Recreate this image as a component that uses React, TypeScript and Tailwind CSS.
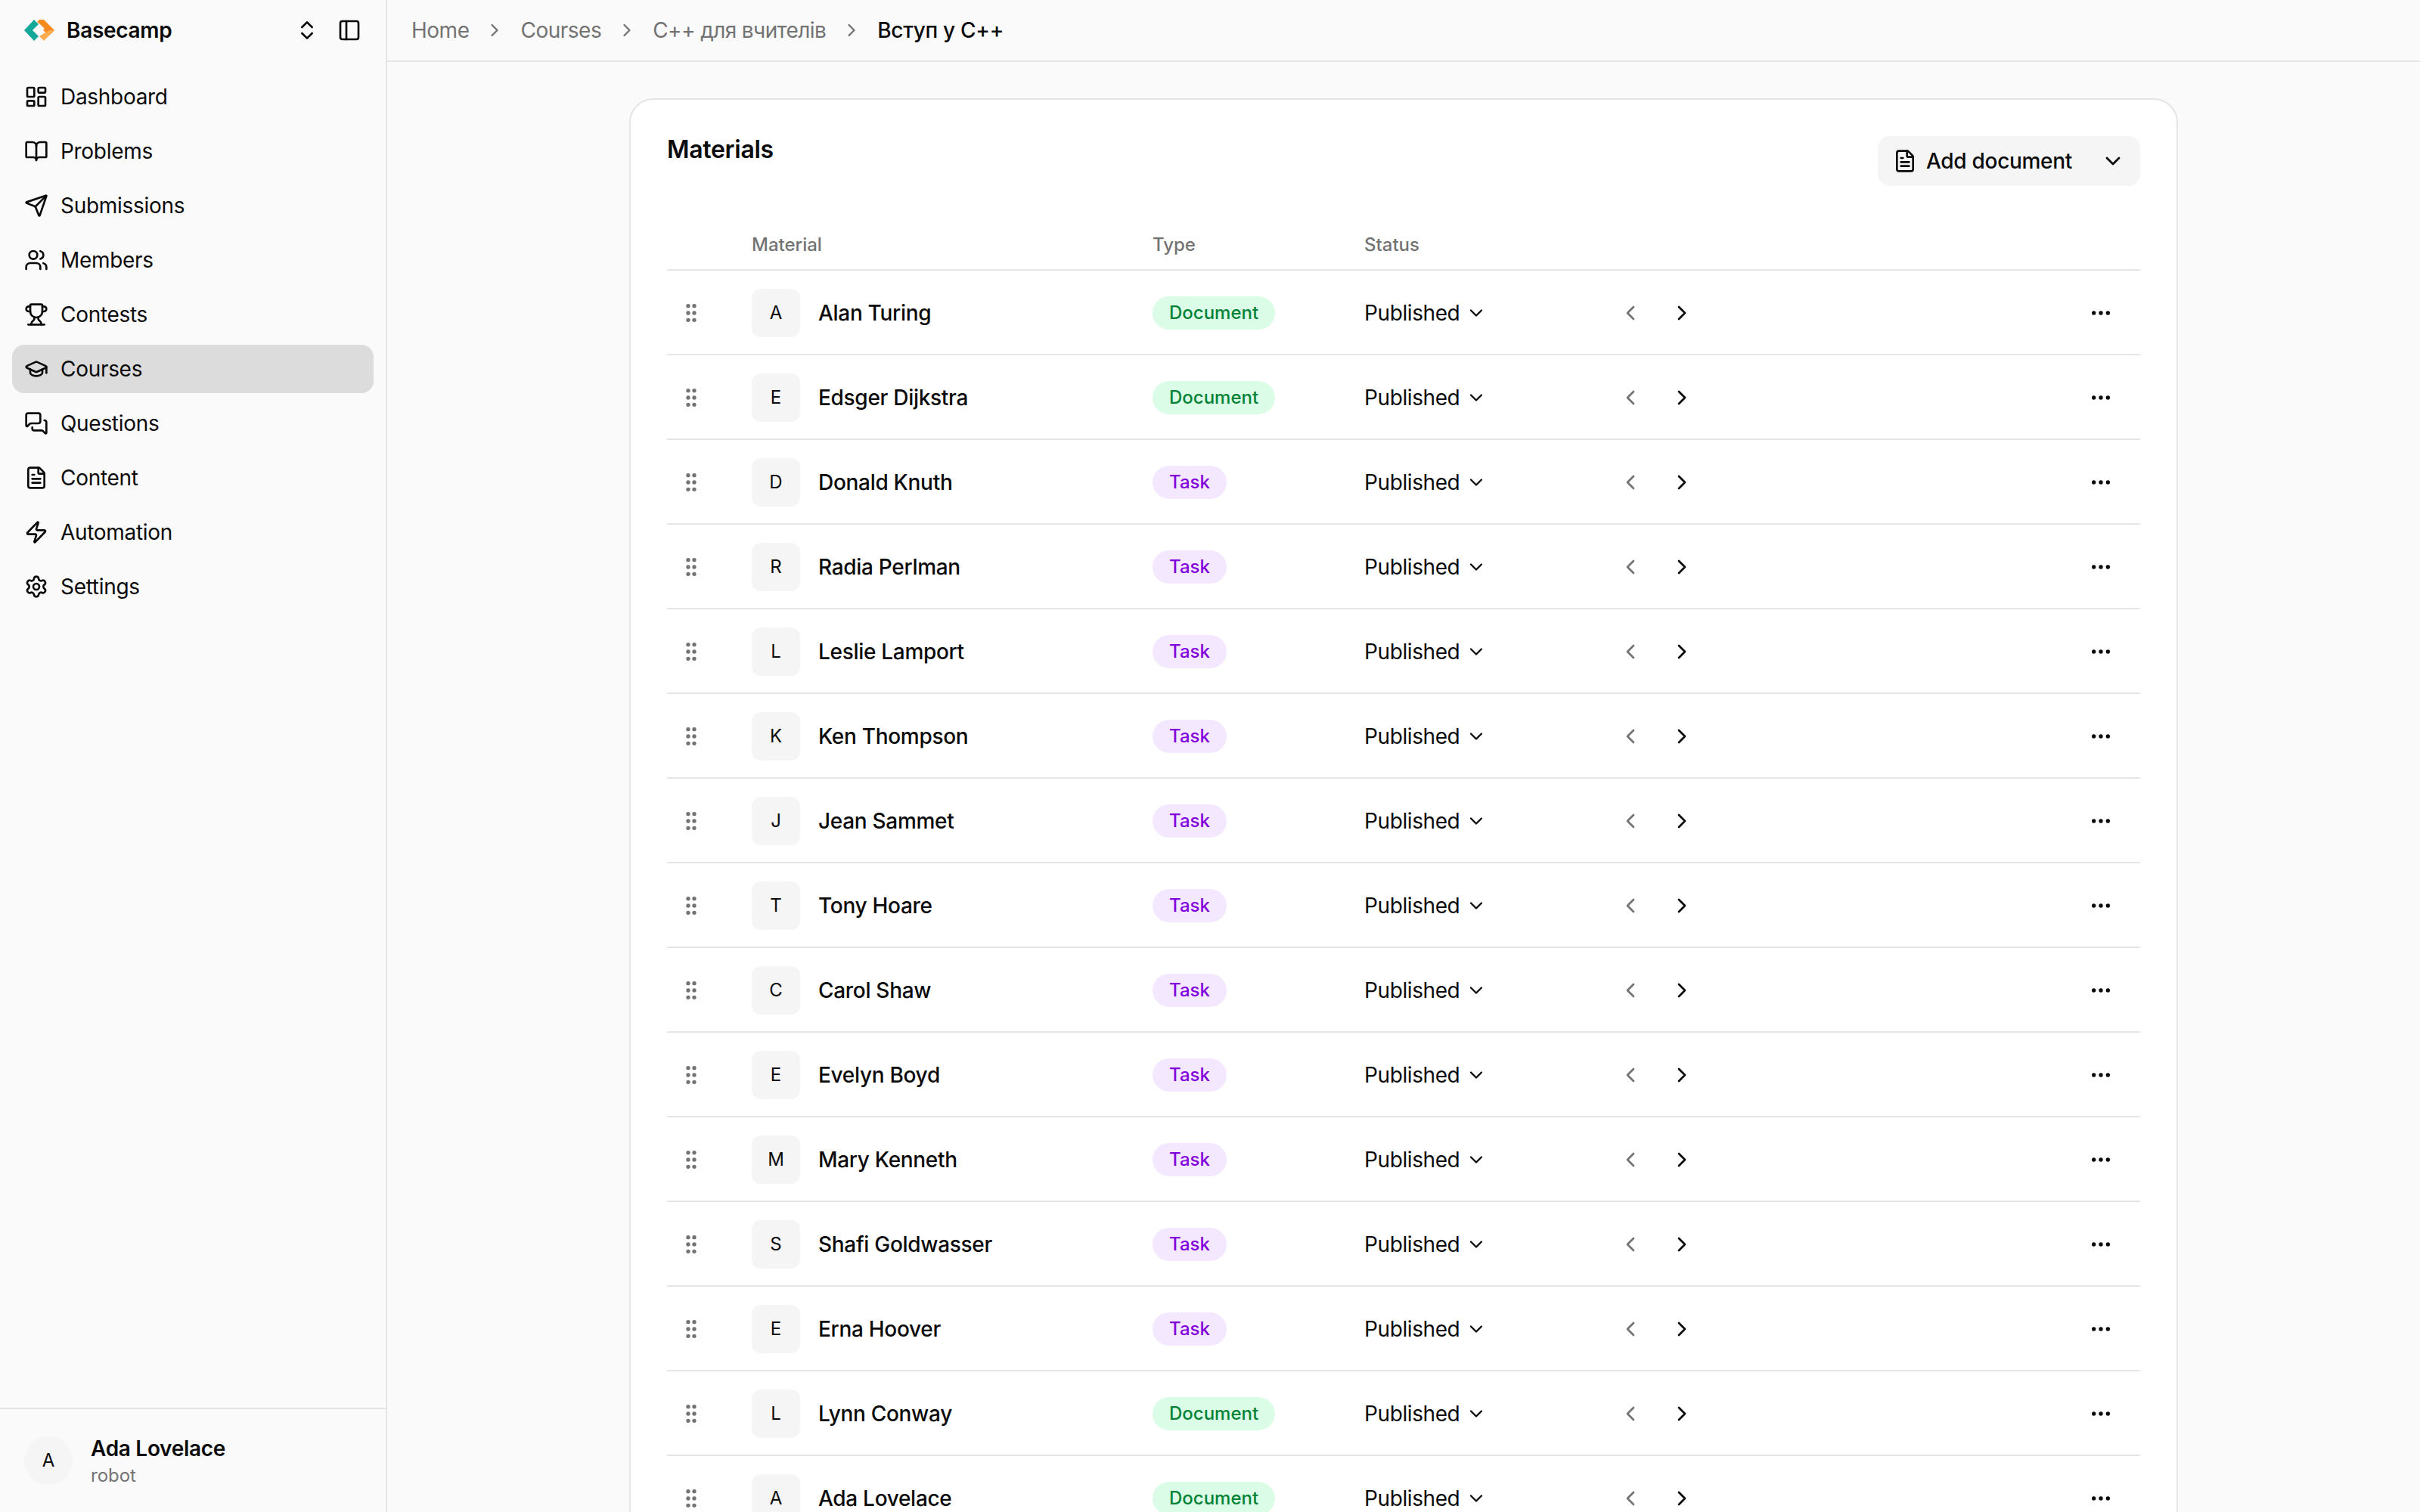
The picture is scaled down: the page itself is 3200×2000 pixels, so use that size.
import React from 'react';
import {
  BookOpen,
  ChevronDown,
  ChevronLeft,
  ChevronRight,
  ChevronsUpDown,
  Ellipsis,
  FileText,
  GraduationCap,
  GripVertical,
  LayoutDashboard,
  MessagesSquare,
  PanelLeft,
  Send,
  Settings,
  Trophy,
  Users,
  Zap,
} from 'lucide-react';

const nav = [
  { label: 'Dashboard', icon: LayoutDashboard },
  { label: 'Problems', icon: BookOpen },
  { label: 'Submissions', icon: Send },
  { label: 'Members', icon: Users },
  { label: 'Contests', icon: Trophy },
  { label: 'Courses', icon: GraduationCap, active: true },
  { label: 'Questions', icon: MessagesSquare },
  { label: 'Content', icon: FileText },
  { label: 'Automation', icon: Zap },
  { label: 'Settings', icon: Settings },
];

const rows = [
  { name: 'Alan Turing', type: 'Document' },
  { name: 'Edsger Dijkstra', type: 'Document' },
  { name: 'Donald Knuth', type: 'Task' },
  { name: 'Radia Perlman', type: 'Task' },
  { name: 'Leslie Lamport', type: 'Task' },
  { name: 'Ken Thompson', type: 'Task' },
  { name: 'Jean Sammet', type: 'Task' },
  { name: 'Tony Hoare', type: 'Task' },
  { name: 'Carol Shaw', type: 'Task' },
  { name: 'Evelyn Boyd', type: 'Task' },
  { name: 'Mary Kenneth', type: 'Task' },
  { name: 'Shafi Goldwasser', type: 'Task' },
  { name: 'Erna Hoover', type: 'Task' },
  { name: 'Lynn Conway', type: 'Document' },
  { name: 'Ada Lovelace', type: 'Document' },
];

const Logo = () => (
  <svg width="40" height="28" viewBox="0 0 40 28">
    <path d="M13 0 L19 6 L11 14 L19 22 L13 28 L0 14 Z" fill="#14a89a" />
    <path d="M20 0 L26 0 L40 14 L33 21 L25 14 L27 12 L21 6 L17 3 Z" fill="#f58a1f" />
    <path d="M33 14 L40 14 L26 28 L20 22 Z" fill="#fdab4f" />
  </svg>
);

const Sidebar = () => (
  <aside className="flex h-full w-[512px] shrink-0 flex-col border-r-2 border-[#e5e5e5] bg-[#fafafa] tracking-[-0.3px]">
    <div className="flex h-20 items-center pl-8 pr-8">
      <Logo />
      <span className="ml-4 text-[28px] font-semibold text-[#0a0a0a]">Basecamp</span>
      <ChevronsUpDown size={32} className="ml-auto text-[#0a0a0a]" />
      <PanelLeft size={32} className="ml-6 text-[#0a0a0a]" />
    </div>
    <nav className="mt-4 flex flex-col gap-2 px-4">
      {nav.map(item => (
        <a
          key={item.label}
          className={`flex h-16 items-center gap-4 rounded-2xl px-4 text-[28px] text-[#0a0a0a] ${item.active ? 'bg-[#dcdcdc]' : ''}`}
        >
          <item.icon size={32} />
          {item.label}
        </a>
      ))}
    </nav>
    <div className="mt-auto flex h-[138px] items-center gap-6 border-t-2 border-[#e5e5e5] px-8">
      <div className="flex h-16 w-16 items-center justify-center rounded-full bg-[#f5f5f5] text-2xl text-[#0a0a0a]">A</div>
      <div className="flex flex-col pt-1">
        <span className="text-[28px] leading-9 font-semibold text-[#0a0a0a]">Ada Lovelace</span>
        <span className="text-2xl leading-9 tracking-normal text-[#737373]">robot</span>
      </div>
    </div>
  </aside>
);

const Breadcrumbs = () => (
  <header className="flex h-[82px] shrink-0 items-center gap-5 border-b-2 border-[#e5e5e5] px-8 text-[28px] tracking-[-0.5px] text-[#737373]">
    <span>Home</span>
    <ChevronRight size={28} />
    <span>Courses</span>
    <ChevronRight size={28} />
    <span className="tracking-[-0.6px]">C++ для вчителів</span>
    <ChevronRight size={28} />
    <span className="font-medium tracking-[-0.3px] text-[#0a0a0a]">Вступ у C++</span>
  </header>
);

const TypeBadge = ({ type }: { type: string }) => (
  <span
    className={`inline-flex h-11 items-center rounded-full px-[22px] text-2xl font-medium tracking-normal ${
      type === 'Document' ? 'bg-green-100 text-green-700' : 'bg-purple-100 text-purple-700'
    }`}
  >
    {type}
  </span>
);

const Row = ({ name, type }: { name: string; type: string }) => (
  <div className="flex h-[112px] shrink-0 items-center border-b-2 border-[#e5e5e5] pt-[2px] text-[28px] tracking-[-0.3px] text-[#0a0a0a]">
    <div className="flex w-[112px] shrink-0 justify-start pl-4">
      <GripVertical size={32} className="text-[#737373]" />
    </div>
    <div className="flex w-[530px] shrink-0 items-center gap-6">
      <div className="flex h-16 w-16 items-center justify-center rounded-xl bg-[#f5f5f5] text-2xl tracking-normal">{name[0]}</div>
      <span className="font-medium">{name}</span>
    </div>
    <div className="flex w-[280px] shrink-0 items-center">
      <TypeBadge type={type} />
    </div>
    <div className="flex w-[336px] shrink-0 items-center gap-2 tracking-[-0.4px]">
      Published
      <ChevronDown size={28} />
    </div>
    <div className="flex items-center gap-[36px]">
      <ChevronLeft size={32} className="text-[#737373]" />
      <ChevronRight size={32} />
    </div>
    <Ellipsis size={32} className="mr-[36px] ml-auto" />
  </div>
);

export default function App() {
  return (
    <div className="flex h-screen overflow-hidden bg-[#fafafa] font-['Inter',sans-serif]">
      <Sidebar />
      <main className="flex min-w-0 flex-1 flex-col">
        <Breadcrumbs />
        <div className="flex flex-1 justify-center overflow-hidden pt-12">
          <section className="h-fit w-[2048px] rounded-[32px] border-2 border-[#e5e5e5] bg-white px-12 pt-12">
            <div className="flex items-start justify-between">
              <h2 className="text-[32px] leading-9 font-semibold tracking-[-0.3px] text-[#0a0a0a]">Materials</h2>
              <button className="flex h-[66px] w-[347px] items-center rounded-2xl bg-[#f5f5f5] pr-5 pl-5 text-[28px] font-medium tracking-[-0.3px] text-[#0a0a0a]">
                <FileText size={32} />
                <span className="ml-3">Add document</span>
                <ChevronDown size={32} className="ml-auto" />
              </button>
            </div>
            <div className="mt-[62px] flex h-[50px] items-start border-b-2 border-[#e5e5e5] text-2xl font-medium text-[#737373]">
              <span className="ml-[112px] w-[530px]">Material</span>
              <span className="w-[280px]">Type</span>
              <span>Status</span>
            </div>
            {rows.map(row => (
              <Row key={row.name} name={row.name} type={row.type} />
            ))}
          </section>
        </div>
      </main>
    </div>
  );
}
